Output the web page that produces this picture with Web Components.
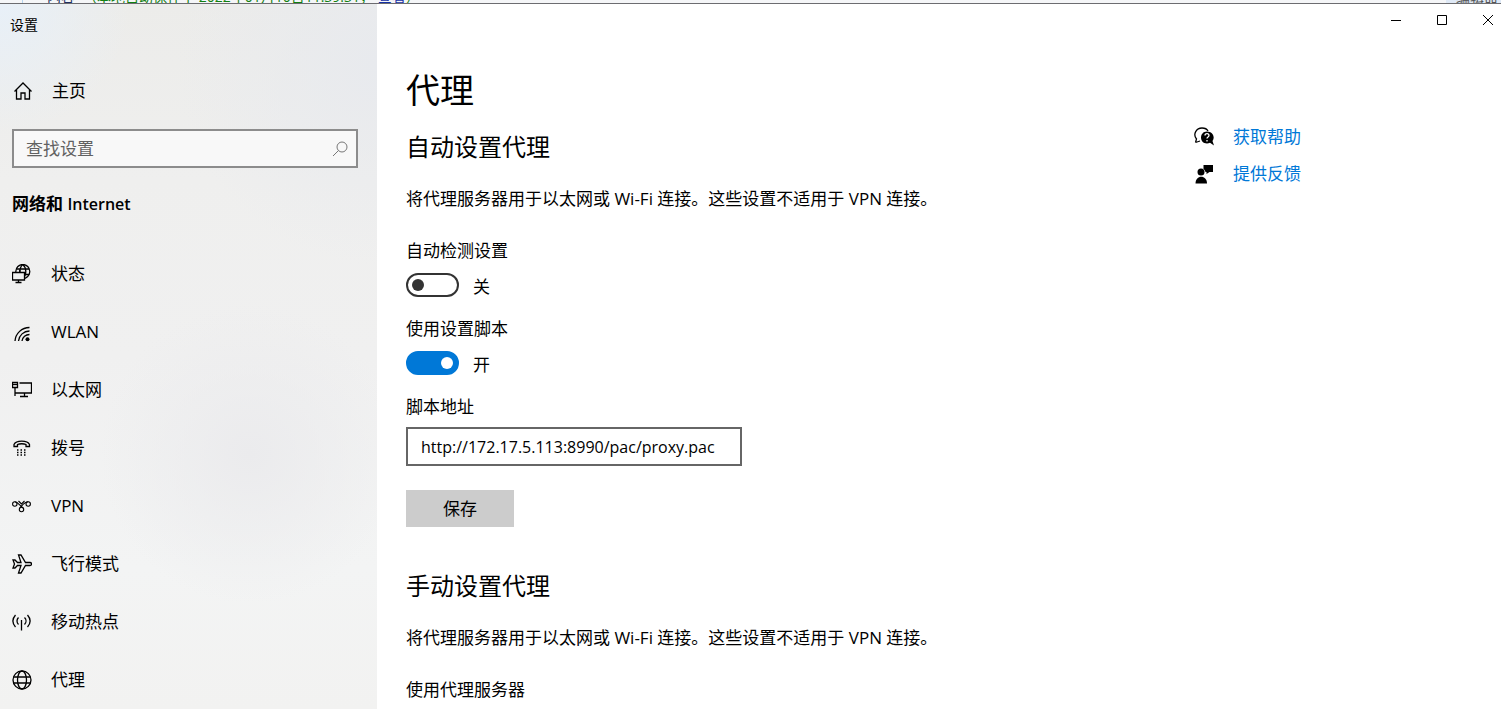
<!DOCTYPE html>
<html lang="zh-CN">
<head>
<meta charset="utf-8">
<title>设置</title>
<style>
  body {
    margin: 0;
    background: #fff;
    color: #000;
    font: 17px/24px "Open Sans", "Noto Sans CJK SC", sans-serif;
  }
</style>
</head>
<body>
<settings-window>
  <backdrop-strip slot="backdrop"></backdrop-strip>
  <settings-sidebar slot="sidebar">
    <nav-item icon="status">状态</nav-item>
    <nav-item icon="wlan">WLAN</nav-item>
    <nav-item icon="ethernet">以太网</nav-item>
    <nav-item icon="dialup">拨号</nav-item>
    <nav-item icon="vpn">VPN</nav-item>
    <nav-item icon="airplane">飞行模式</nav-item>
    <nav-item icon="hotspot">移动热点</nav-item>
    <nav-item icon="proxy">代理</nav-item>
  </settings-sidebar>
  <window-controls slot="controls"></window-controls>
  <proxy-page slot="page"></proxy-page>
  <help-link slot="help" icon="help">获取帮助</help-link>
  <help-link slot="help" icon="feedback">提供反馈</help-link>
</settings-window>

<script>
const ICONS = {
  home: `<path d="M1.500 10.500 10 2l8.500 8.500M3.500 9v9H8v-6h4v6h4.500V9"/>`,
  status: `<circle cx="10.800" cy="7.500" r="7"/><path d="M4.500 5h12.500M12 10.500h5.500M10.800.500c-2.500 2-3 4.500-3 8M10.800.500c4 3.500 4 10.500 0 14"/><path class="knock" d="M.500 8.500h12v7.500H.500z"/><path d="M6.500 16v2.500M3.500 18.500h6"/><path d="M7.800 8.500V6"/>`,
  wlan: `<path d="M3 19A14.500 14.500 0 0 1 17.500 5.500M6.500 19A11 11 0 0 1 17.500 9M10 19A7.500 7.500 0 0 1 17.500 12.500"/><circle class="fill" cx="15.500" cy="17.200" r="2"/>`,
  ethernet: `<path d="M7.500 3h12v10H5.500M.500 2.500h5v5h-5zM3 7.500v8.500M3 13h3M12.500 13v3.500M8 16.500h8"/><path d="M.500 4.500h5"/>`,
  dialup: `<path d="M2 8.500h3.500V6.500c2-1 6.500-1 8.500 0v2h3.500V6.500C15.500 2 4 2 2 6.500z"/><path class="dots" d="M5 12h8.500M5 14.500h8.500M5 17h8.500"/>`,
  vpn: `<g class="thin"><circle cx="2.800" cy="8" r="2.200"/><circle cx="9.500" cy="13.500" r="2.200"/><circle cx="16.200" cy="8" r="2.200"/><path d="M2.800 5.800C6 5.800 7 9 11.200 12M7.800 12C10.500 9 12.500 5.800 16.200 5.800M6.500 5l3 3 3-3"/></g>`,
  airplane: `<path d="M1 6h2l2.500 2.500H9L6.500 1h2.500L13.500 8.500H18c2 0 2 3 0 3h-4.500L9 19H6.500L9 11.500H5.500L3 14H1L2.500 10z"/>`,
  hotspot: `<path d="M9.500 8v10.500M6.500 5.500c-2 2-2 5 0 7M12.500 5.500c2 2 2 5 0 7M3.500 3c-3.500 4-3.500 8 0 12M15.500 3c3.500 4 3.500 8 0 12"/>`,
  proxy: `<circle cx="10" cy="10" r="9"/><ellipse cx="10" cy="10" rx="4.500" ry="9"/><path d="M1.500 7h17M1.500 13h17"/>`,
  search: `<circle cx="12" cy="8" r="5"/><path d="M8.500 11.500 3 17"/>`,
  help: `<path d="M1.500 15.500 2.500 12C-1.500 7 2.500 1 8 1c3 0 5 1 6 3M1.500 15.500l4.500-1.500"/><path class="fill" d="M13 4.500c-8 0-8 12 0 12 1 0 2-.2 3-.7l4 2.700-1.500-4.500c3-4 0-9.500-5.500-9.500z"/><path class="light" d="M11 8.500c0-2.500 4-2.500 4 0 0 1.500-2 1.500-2 3M13 13v1.500"/>`,
  feedback: `<path class="fill" d="M9.500 1H19v7h-3.500L12.500 10V8h-1a4.500 4.500 0 0 0-2-3z"/><circle class="fill" cx="7" cy="8" r="3.500"/><path class="fill" d="M1.500 19.500c0-9 11.500-9 11.500 0z"/>`,
  minimize: `<path d="M5 10.500h10"/>`,
  maximize: `<path d="M5.500 5.500h9v9h-9z"/>`,
  close: `<path d="m5 5 10 10M15 5 5 15"/>`
};

class Part extends HTMLElement {
  connectedCallback() {
    if (this.shadowRoot) return;
    this.attachShadow({ mode: "open" }).innerHTML =
      `<style>:host,*{box-sizing:border-box}${this.css()}</style>${this.html()}`;
  }
}

customElements.define("line-icon", class extends Part {
  css() { return `
    :host { display: block; flex: none; width: 20px; height: 20px; }
    svg { display: block; fill: none; stroke: currentColor; stroke-width: var(--stroke, 1.300); }
    .fill { fill: currentColor; stroke: none; }
    .knock { fill: #f0f1f1; }
    .light { stroke: #fff; }
    .thin { stroke-width: 1.100; }
    .dots { stroke-dasharray: 1.500 2; }`; }
  html() { return `<svg width="20" height="20" viewBox="0 0 20 20" aria-hidden="true">${ICONS[this.getAttribute("name")]}</svg>`; }
});

customElements.define("backdrop-strip", class extends Part {
  css() { return `
    :host { display: flex; justify-content: space-between; align-items: flex-end; height: 4px;
      overflow: hidden; background: #f5f6f8; border-bottom: 1px solid #6c6c70;
      font-size: 14px; line-height: 12px; white-space: nowrap; }
    .note { display: flex; gap: 8px; padding-left: 24px; margin-left: 22px; border-left: 1px solid #b5d4ee; color: #118011; }
    .note b { font-weight: 400; color: #203060; }
    .note i { font-style: normal; color: #1530a5; }
    .tab { padding-left: 10px; width: 55px; background: #dfe9f6; color: #555; }`; }
  html() { return `<div class="note"><b>内容</b><span>（本地自动保存于 2022年01月10日11:39:31， <i>查看</i>）</span></div><div class="tab">编辑器</div>`; }
});

customElements.define("settings-window", class extends Part {
  css() { return `
    :host { display: flex; flex-direction: column; min-height: 100vh; }
    .body { flex: 1; display: grid; grid-template-columns: 377px minmax(0, 1fr); }
    .columns { display: grid; grid-template-columns: minmax(0, 1fr) 307px; padding-left: 29px; }
    aside { padding-top: 82px; }`; }
  html() { return `<slot name="backdrop"></slot>
    <div class="body">
      <slot name="sidebar"></slot>
      <main>
        <slot name="controls"></slot>
        <div class="columns"><slot name="page"></slot><aside><slot name="help"></slot></aside></div>
      </main>
    </div>`; }
});

customElements.define("window-controls", class extends Part {
  css() { return `
    :host { display: flex; justify-content: flex-end; gap: 20px; height: 32px; --stroke: 1; }
    button { display: grid; place-items: center; width: 26px; padding: 0; border: 0; background: none; color: #000; }`; }
  html() { return [["minimize", "最小化"], ["maximize", "最大化"], ["close", "关闭"]]
    .map(([n, t]) => `<button type="button" aria-label="${t}"><line-icon name="${n}"></line-icon></button>`).join(""); }
});

customElements.define("settings-sidebar", class extends Part {
  css() { return `
    :host { display: block;
      background:
        radial-gradient(circle at 0 0, #e8f0f8 0, #e8f0f800 130px),
        radial-gradient(circle at 100% 60px, #e8eaee 0, #e8eaee00 200px),
        radial-gradient(circle at 250px 450px, #ebebed 0, #ebebed00 150px),
        linear-gradient(#ececea, #efefee 25%, #f0f0f0 50%, #f3f4f4 80%, #f2f2f1); }
    .title { padding: 10px 10px 0; font-size: 14px; line-height: 22px; }
    .home { display: flex; align-items: center; gap: 19px; height: 58px; margin-top: 26px; padding-left: 13px; color: inherit; text-decoration: none; }
    form { display: flex; align-items: center; height: 39px; margin: 9px 19px 0 12px; padding-right: 6px; border: 2px solid #8c8c8c; background: #f8f8f8; }
    input { flex: 1; min-width: 0; padding: 0 0 0 12px; border: 0; outline: 0; background: none; font: inherit; color: #000; }
    input::placeholder { color: #616161; opacity: 1; }
    form button { display: grid; padding: 0; border: 0; background: none; color: #777; --stroke: 1; }
    h2 { margin: 24px 12px 29px; font-size: 17px; line-height: 24px; font-weight: 700; }
    h2 span { font-size: 16px; font-weight: 600; }`; }
  html() { return `<div class="title">设置</div>
    <a class="home" href="#home"><line-icon name="home"></line-icon>主页</a>
    <form role="search"><input type="text" aria-label="查找设置" placeholder="查找设置"><button type="button" aria-label="搜索"><line-icon name="search"></line-icon></button></form>
    <h2>网络和 <span>Internet</span></h2>
    <nav><slot></slot></nav>`; }
});

customElements.define("nav-item", class extends Part {
  css() { return `
    :host { display: block; }
    a { display: flex; align-items: center; gap: 19px; height: 58px; padding-left: 12px; color: inherit; text-decoration: none; }`; }
  html() { return `<a href="#${this.getAttribute("icon")}"><line-icon name="${this.getAttribute("icon")}"></line-icon><slot></slot></a>`; }
});

customElements.define("help-link", class extends Part {
  css() { return `
    :host { display: block; }
    a { display: flex; align-items: center; gap: 19px; height: 37px; color: #0078d7; text-decoration: none; }
    line-icon { color: #000; }`; }
  html() { return `<a href="#${this.getAttribute("icon")}"><line-icon name="${this.getAttribute("icon")}"></line-icon><slot></slot></a>`; }
});

customElements.define("toggle-switch", class extends Part {
  css() { return `
    :host { display: block; height: 78px; }
    label { display: block; }
    .row { display: flex; align-items: flex-start; gap: 14px; margin-top: 10px; }
    .row span { padding-top: 2px; }
    input { appearance: none; display: flex; align-items: center; width: 53px; height: 24px; margin: 0; padding: 0 4px; border: 2px solid #333; border-radius: 12px; }
    input::before { content: ""; width: 12px; height: 12px; border-radius: 50%; background: #333; }
    input:checked { justify-content: flex-end; border-color: #0078d7; background: #0078d7; }
    input:checked::before { background: #fff; }`; }
  html() { const on = this.hasAttribute("checked");
    return `<label for="switch">${this.getAttribute("label")}</label>
    <div class="row"><input id="switch" type="checkbox" role="switch" ${on ? "checked" : ""}><span>${on ? "开" : "关"}</span></div>`; }
});

customElements.define("proxy-page", class extends Part {
  css() { return `
    :host { display: block; }
    h1, h2, p { margin: 0; font-weight: 400; }
    h1 { padding-top: 30px; font-size: 34px; line-height: 48px; }
    h2 { margin-top: 16px; font-size: 24px; line-height: 34px; }
    p { margin: 23px 0 28px; }
    label { display: block; }
    input { display: block; width: 336px; max-width: 100%; height: 39px; margin: 8px 0 24px; padding: 0 13px; border: 2px solid #666; background: #fff; font: inherit; font-size: 16px; color: #000; }
    button { display: block; width: 108px; height: 37px; padding: 0; border: 0; background: #ccc; font: inherit; color: #000; }
    .manual { margin-top: 42px; }`; }
  html() { return `<h1>代理</h1>
    <section>
      <h2>自动设置代理</h2>
      <p>将代理服务器用于以太网或 Wi-Fi 连接。这些设置不适用于 VPN 连接。</p>
      <toggle-switch label="自动检测设置"></toggle-switch>
      <toggle-switch label="使用设置脚本" checked></toggle-switch>
      <label for="script-url">脚本地址</label>
      <input id="script-url" type="text" value="http://172.17.5.113:8990/pac/proxy.pac">
      <button type="button">保存</button>
    </section>
    <section>
      <h2 class="manual">手动设置代理</h2>
      <p>将代理服务器用于以太网或 Wi-Fi 连接。这些设置不适用于 VPN 连接。</p>
      <div>使用代理服务器</div>
    </section>`; }
});
</script>
</body>
</html>
